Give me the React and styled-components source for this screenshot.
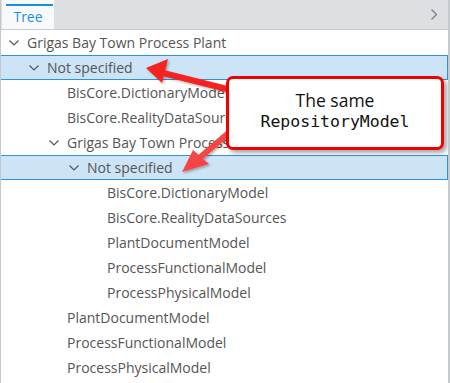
import React from "react";
import styled, { createGlobalStyle } from "styled-components";

const GlobalStyle = createGlobalStyle`
  html, body {
    margin: 0;
    padding: 0;
    background: #ffffff;
  }
  body {
    font-family: "Open Sans", "Liberation Sans", sans-serif;
  }
`;

const ScPanel = styled.div`
  position: relative;
  width: 450px;
  height: 383px;
  box-sizing: border-box;
  border-left: 1px solid #c4c9ce;
  border-right: 2px solid #c4c9ce;
  overflow: hidden;
  background: #fff;
`;

const ScTabStrip = styled.div`
  height: 30px;
  box-sizing: border-box;
  display: flex;
  align-items: stretch;
  background: #dde0e3;
  border-bottom: 1px solid #c8ccd0;

  .tabChevron {
    margin-left: auto;
    width: 28px;
    display: flex;
    align-items: center;
    justify-content: center;
  }
`;

const ScTab = styled.div`
  width: 52px;
  margin-left: 1px;
  box-sizing: border-box;
  background: #f8f9fa;
  color: #1a8fe0;
  font-size: 14px;
  display: flex;
  align-items: center;
  justify-content: center;
  padding-top: 3px;
  position: relative;

  &::before {
    content: "";
    position: absolute;
    left: 4px;
    right: 1px;
    top: 4px;
    height: 2px;
    background: #1a8fe0;
  }
`;

const ScTree = styled.div`
  padding-top: 0;
`;

const ScRow = styled.div`
  height: 25px;
  box-sizing: border-box;
  display: flex;
  align-items: center;
  padding-left: ${(p) => 6 + p.$level * 20}px;
  font-size: 14px;
  color: #555;
  white-space: nowrap;
  background: ${(p) => (p.$selected ? "#cce4f6" : "transparent")};
  border: 1px solid ${(p) => (p.$selected ? "#2b95dc" : "transparent")};
  border-left-width: 0;

  .expander {
    width: 20px;
    flex: none;
    display: flex;
    align-items: center;
    padding-left: 2px;
    box-sizing: border-box;
  }
`;

const ScCallout = styled.div`
  position: absolute;
  left: 225px;
  top: 76px;
  width: 218px;
  height: 74px;
  box-sizing: border-box;
  background: #fff;
  border: 3px solid #f20000;
  border-radius: 7px;
  box-shadow: 3px 3px 4px rgba(0, 0, 0, 0.35);
  display: flex;
  flex-direction: column;
  align-items: center;
  justify-content: center;
  color: #111;
  line-height: 21px;
  padding-bottom: 4px;

  .calloutTitle {
    font-family: "Open Sans", "Liberation Sans", sans-serif;
    font-size: 17.5px;
    font-weight: 500;
  }
  .calloutCode {
    font-family: "DejaVu Sans Mono", "Liberation Mono", monospace;
    font-size: 16.5px;
  }
`;

const ScArrows = styled.svg`
  position: absolute;
  left: 0;
  top: 0;
  pointer-events: none;
`;

const ChevronDown = () => (
  <svg width="10" height="6" viewBox="0 0 10 6">
    <path d="M0.5 0.5 L5 5 L9.5 0.5" fill="none" stroke="#555" strokeWidth="1.2" />
  </svg>
);

const ChevronRight = () => (
  <svg width="6" height="11" viewBox="0 0 6 11">
    <path d="M0.5 0.5 L5.5 5.5 L0.5 10.5" fill="none" stroke="#7a7f85" strokeWidth="1.3" />
  </svg>
);

const rows = [
  { level: 0, label: "Grigas Bay Town Process Plant", expanded: true },
  { level: 1, label: "Not specified", expanded: true, selected: true },
  { level: 2, label: "BisCore.DictionaryModel" },
  { level: 2, label: "BisCore.RealityDataSources" },
  { level: 2, label: "Grigas Bay Town Process Plant", expanded: true },
  { level: 3, label: "Not specified", expanded: true, selected: true },
  { level: 4, label: "BisCore.DictionaryModel" },
  { level: 4, label: "BisCore.RealityDataSources" },
  { level: 4, label: "PlantDocumentModel" },
  { level: 4, label: "ProcessFunctionalModel" },
  { level: 4, label: "ProcessPhysicalModel" },
  { level: 2, label: "PlantDocumentModel" },
  { level: 2, label: "ProcessFunctionalModel" },
  { level: 2, label: "ProcessPhysicalModel" },
];

const Arrows = () => (
  <ScArrows width="450" height="383">
    <defs>
      <filter id="arrowShadow" x="-20%" y="-20%" width="140%" height="140%">
        <feDropShadow dx="1.5" dy="1.5" stdDeviation="1" floodColor="#000" floodOpacity="0.3" />
      </filter>
    </defs>
    <g fill="#f52020" filter="url(#arrowShadow)">
      <line x1="238" y1="92" x2="158" y2="72" stroke="#f52020" strokeWidth="6" />
      <polygon points="145,68 167,59 161,83" />
    </g>
    <g fill="#f54545" filter="url(#arrowShadow)">
      <line x1="238" y1="124" x2="196" y2="160" stroke="#f54545" strokeWidth="6" />
      <polygon points="181,172 192,150 208,164" />
    </g>
  </ScArrows>
);

export default function App() {
  return (
    <>
      <GlobalStyle />
      <ScPanel>
        <ScTabStrip>
          <ScTab>Tree</ScTab>
          <div className="tabChevron">
            <ChevronRight />
          </div>
        </ScTabStrip>
        <ScTree>
          {rows.map((r, i) => (
            <ScRow key={i} $level={r.level} $selected={r.selected}>
              <span className="expander">{r.expanded && <ChevronDown />}</span>
              <span>{r.label}</span>
            </ScRow>
          ))}
        </ScTree>
        <Arrows />
        <ScCallout>
          <span className="calloutTitle">The same</span>
          <span className="calloutCode">RepositoryModel</span>
        </ScCallout>
      </ScPanel>
    </>
  );
}
